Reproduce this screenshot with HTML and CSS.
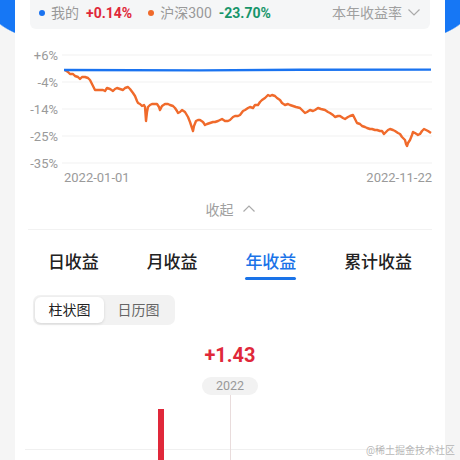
FILE: index.html
```html
<!DOCTYPE html>
<html lang="zh">
<head>
<meta charset="utf-8">
<link rel="stylesheet" href="styles.css">
</head>
<body>
<div class="card">
  <div class="legend">
    <span class="dot dot-blue"></span><span class="lbl">我的</span><span class="val red">+0.14%</span>
    <span class="dot dot-orange"></span><span class="lbl">沪深300</span><span class="val green">-23.70%</span>
    <span class="period">本年收益率<svg class="chev" width="12" height="7" viewBox="0 0 12 7"><polyline points="0.5,0.5 6,6 11.5,0.5" fill="none" stroke="#aaa" stroke-width="1.2"/></svg></span>
  </div>
  <svg class="trend" width="430" height="150" viewBox="15 40 430 150">
    <g stroke="#f1f1f1" stroke-width="1">
      <line x1="62" y1="55" x2="432" y2="55"/>
      <line x1="62" y1="82" x2="432" y2="82"/>
      <line x1="62" y1="109" x2="432" y2="109"/>
      <line x1="62" y1="136" x2="432" y2="136"/>
      <line x1="62" y1="163" x2="432" y2="163"/>
    </g>
    <g class="axis" text-anchor="end">
      <text x="58" y="59.5">+6%</text>
      <text x="58" y="86.5">-4%</text>
      <text x="58" y="113.5">-14%</text>
      <text x="58" y="140.5">-25%</text>
      <text x="58" y="167.5">-35%</text>
    </g>
    <text class="axis" x="64" y="182">2022-01-01</text>
    <text class="axis" x="432" y="182" text-anchor="end">2022-11-22</text>
    <polyline fill="none" stroke="#f06a2b" stroke-width="2.4" stroke-linejoin="round" points="65,70 68,72 70,74 73,74 75,76 78,77 80,79 82,77 85,77 88,78 90,80 92,84 95,90 98,90 100,90 103,90 105,91 107,88 110,89 113,91 115,89 117,88 120,89 123,90 125,88 128,87 130,89 133,93 135,96 137,101 138,103 140,104 142,106 144,105 145,107 146,121 147,112 148,107 150,105 152,104 155,104 157,104 159,107 160,110 162,106 165,104 168,104 170,105 173,106 175,108 177,111 178,113 180,112 182,110 185,112 188,117 190,122 192,128 193,131 194,126 196,121 198,120 200,120 203,122 205,125 207,124 210,123 213,122 215,122 218,121 220,120 222,119 225,121 228,121 230,120 233,117 235,116 238,116 240,115 243,111 245,110 248,108 250,107 253,108 255,105 258,105 260,102 262,100 265,98 268,95 270,96 272,95 275,96 277,98 280,100 282,103 285,105 288,104 290,105 293,106 296,107 300,108 302,110 305,113 307,112 310,110 313,111 315,110 318,108 321,109 325,110 328,112 330,113 333,115 335,117 338,116 340,116 343,118 345,119 348,117 350,116 353,115 355,119 357,123 360,124 362,126 365,127 367,128 370,129 372,129 375,130 377,130 380,131 382,131 384,134 386,132 388,130 390,129 393,130 395,131 398,133 400,134 402,137 405,140 406,144 407,146 408,143 410,140 412,135 413,132 415,133 418,135 420,134 422,131 424,129 426,130 428,131 431,133"/>
    <polyline fill="none" stroke="#1a73f0" stroke-width="2.4" points="64,70 200,70.4 300,69.8 431,69.6"/>
  </svg>
  <div class="collapse">收起<svg class="chev-up" width="12" height="7" viewBox="0 0 12 7"><polyline points="0.5,6.5 6,1 11.5,6.5" fill="none" stroke="#aaa" stroke-width="1.2"/></svg></div>
  <div class="tabs">
    <span class="tab">日收益</span>
    <span class="tab">月收益</span>
    <span class="tab active">年收益</span>
    <span class="tab">累计收益</span>
  </div>
  <div class="seg">
    <span class="seg-btn on">柱状图</span>
    <span class="seg-btn">日历图</span>
  </div>
  <div class="bars">
    <div class="bar-val">+1.43</div>
    <div class="pill">2022</div>
    <svg class="bar-chart" width="430" height="65" viewBox="15 395 430 65">
      <line x1="25" y1="449.5" x2="443" y2="449.5" stroke="#f0f0f0" stroke-width="1"/>
      <line x1="230.5" y1="395" x2="230.5" y2="460" stroke="#e9dcdc" stroke-width="1"/>
      <rect x="158" y="409" width="6" height="60" fill="#e0283a"/>
    </svg>
  </div>
</div>
<div class="watermark">@稀土掘金技术社区</div>
</body>
</html>
```

FILE: styles.css
```css
* { box-sizing: border-box; }
html, body { margin: 0; padding: 0; }
body {
  width: 460px;
  height: 460px;
  overflow: hidden;
  position: relative;
  font-family: Roboto, "Noto Sans CJK SC", sans-serif;
  background-color: #f5f5f5;
  background-image: radial-gradient(ellipse 240px 53px at 230px 10px, #1677f5 99%, rgba(22,119,245,0) 100%);
  background-repeat: no-repeat;
}
.card {
  margin: 0 15px;
  height: 460px;
  background: #fff;
  display: flex;
  flex-direction: column;
}
.legend {
  margin: 0 15px;
  height: 29px;
  padding: 0 10px 4px 9px;
  background: #f5f6f7;
  border-radius: 0 0 6px 6px;
  display: flex;
  align-items: center;
  font-size: 14px;
  line-height: 20px;
  color: #999;
}
.dot {
  width: 6px;
  height: 6px;
  border-radius: 50%;
  margin-right: 6px;
}
.dot-blue { background: #1a73f0; }
.dot-orange { background: #f06a2b; margin-left: 16px; }
.lbl { color: #999; margin-right: 7px; }
.val { font-weight: 700; }
.red { color: #e0283a; }
.green { color: #17956a; }
.period {
  margin-left: auto;
  display: flex;
  align-items: center;
  color: #a0a0a0;
}
.chev { margin-left: 6px; }
.trend { display: block; margin-top: 11px; }
.axis { font-size: 13px; fill: #9a9a9a; font-family: Roboto, sans-serif; }
.collapse {
  margin: 0 13px;
  height: 40px;
  border-bottom: 1px solid #f2f2f2;
  display: flex;
  align-items: center;
  justify-content: center;
  font-size: 14px;
  color: #a0a0a0;
  padding-bottom: 2px;
}
.chev-up { margin-left: 9px; }
.tabs {
  margin: 0 9px;
  padding-top: 20px;
  display: flex;
  justify-content: space-around;
  align-items: flex-start;
}
.tab {
  font-size: 17px;
  line-height: 24px;
  font-weight: 500;
  color: #222;
  display: flex;
  flex-direction: column;
}
.tab.active { color: #1a73e8; }
.tab.active::after {
  content: "";
  display: block;
  height: 3px;
  margin-top: 3px;
  border-radius: 2px;
  background: #1a73e8;
}
.seg {
  margin: 15px 0 0 18px;
  align-self: flex-start;
  display: flex;
  padding: 2px;
  height: 30px;
  background: #f2f2f2;
  border-radius: 7px;
}
.seg-btn {
  width: 69px;
  height: 26px;
  line-height: 26px;
  text-align: center;
  font-size: 14px;
  color: #666;
  border-radius: 6px;
}
.seg-btn.on {
  background: #fff;
  color: #222;
  box-shadow: 0 1px 3px rgba(0,0,0,0.12);
}
.bars {
  display: flex;
  flex-direction: column;
  align-items: center;
}
.bar-val {
  margin-top: 18px;
  font-size: 20px;
  line-height: 24px;
  font-weight: 700;
  color: #e0283a;
}
.pill {
  margin-top: 10px;
  width: 56px;
  height: 18px;
  line-height: 18px;
  text-align: center;
  border-radius: 9px;
  background: #f2f2f2;
  color: #999;
  font-size: 12.5px;
}
.bar-chart { display: block; }
.watermark {
  position: absolute;
  right: 5px;
  top: 444px;
  font-size: 10px;
  line-height: 14px;
  color: rgba(150,150,150,0.7);
}
```
